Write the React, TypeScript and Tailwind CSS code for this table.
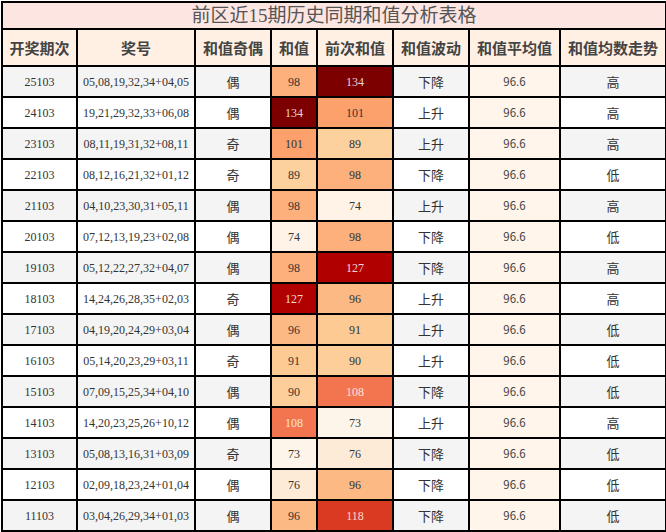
import React from 'react';

type Row = {
  issue: string;
  nums: string;
  parity: string;
  sum: number;
  prev: number;
  trend: string;
  level: string;
};

const rows: Row[] = [
  { issue: '25103', nums: '05,08,19,32,34+04,05', parity: '偶', sum: 98, prev: 134, trend: '下降', level: '高' },
  { issue: '24103', nums: '19,21,29,32,33+06,08', parity: '偶', sum: 134, prev: 101, trend: '上升', level: '高' },
  { issue: '23103', nums: '08,11,19,31,32+08,11', parity: '奇', sum: 101, prev: 89, trend: '上升', level: '高' },
  { issue: '22103', nums: '08,12,16,21,32+01,12', parity: '奇', sum: 89, prev: 98, trend: '下降', level: '低' },
  { issue: '21103', nums: '04,10,23,30,31+05,11', parity: '偶', sum: 98, prev: 74, trend: '上升', level: '高' },
  { issue: '20103', nums: '07,12,13,19,23+02,08', parity: '偶', sum: 74, prev: 98, trend: '下降', level: '低' },
  { issue: '19103', nums: '05,12,22,27,32+04,07', parity: '偶', sum: 98, prev: 127, trend: '下降', level: '高' },
  { issue: '18103', nums: '14,24,26,28,35+02,03', parity: '奇', sum: 127, prev: 96, trend: '上升', level: '高' },
  { issue: '17103', nums: '04,19,20,24,29+03,04', parity: '偶', sum: 96, prev: 91, trend: '上升', level: '低' },
  { issue: '16103', nums: '05,14,20,23,29+03,11', parity: '奇', sum: 91, prev: 90, trend: '上升', level: '低' },
  { issue: '15103', nums: '07,09,15,25,34+04,10', parity: '偶', sum: 90, prev: 108, trend: '下降', level: '低' },
  { issue: '14103', nums: '14,20,23,25,26+10,12', parity: '偶', sum: 108, prev: 73, trend: '上升', level: '高' },
  { issue: '13103', nums: '05,08,13,16,31+03,09', parity: '奇', sum: 73, prev: 76, trend: '下降', level: '低' },
  { issue: '12103', nums: '02,09,18,23,24+01,04', parity: '偶', sum: 76, prev: 96, trend: '下降', level: '低' },
  { issue: '11103', nums: '03,04,26,29,34+01,03', parity: '偶', sum: 96, prev: 118, trend: '下降', level: '低' },
];

// heat map colours for the two sum columns
const heat: Record<number, string> = {
  73: 'bg-[#fef5ea] text-[#333]',
  74: 'bg-[#fef3e6] text-[#333]',
  76: 'bg-[#feebd7] text-[#333]',
  89: 'bg-[#fdd19e] text-[#333]',
  90: 'bg-[#fdce99] text-[#333]',
  91: 'bg-[#fdca94] text-[#333]',
  96: 'bg-[#fdb983] text-[#333]',
  98: 'bg-[#fdb07c] text-[#333]',
  101: 'bg-[#fca06c] text-[#333]',
  108: 'bg-[#f27550] text-[#fde3d8]',
  118: 'bg-[#d93a21] text-[#fbd9d0]',
  127: 'bg-[#b10000] text-[#f3d6d6]',
  134: 'bg-[#7d0000] text-[#ecd2d2]',
};

const headers = ['开奖期次', '奖号', '和值奇偶', '和值', '前次和值', '和值波动', '和值平均值', '和值均数走势'];
const widths = ['w-[75px]', 'w-[118px]', 'w-[76px]', 'w-[46px]', 'w-[76px]', 'w-[76px]', 'w-[91px]', 'w-[106px]'];

const serif = "font-['Liberation_Serif','Noto_Sans_CJK_SC',serif]";
const cjk = "font-['Noto_Sans_CJK_SC',sans-serif]";

export default function App() {
  return (
    <div className="w-[666px] h-[532px] bg-white overflow-hidden p-px">
      <table className="w-[664px] table-fixed border-collapse text-center">
        <colgroup>
          {widths.map((w, i) => (
            <col key={i} className={w} />
          ))}
        </colgroup>
        <thead>
          <tr className="h-[27px]">
            <th colSpan={8} className={`border-2 border-black bg-[#fde6e2] text-[19px] font-normal text-[#555] leading-none ${serif}`}>
              前区近15期历史同期和值分析表格
            </th>
          </tr>
          <tr className="h-[37px]">
            {headers.map((h) => (
              <th key={h} className={`border-2 border-black bg-[#fff0e3] text-[15px] font-bold text-[#444] leading-none ${cjk}`}>
                {h}
              </th>
            ))}
          </tr>
        </thead>
        <tbody>
          {rows.map((r, i) => {
            const stripe = i % 2 === 0 ? 'bg-[#f4f4f4]' : 'bg-white';
            return (
              <tr key={r.issue} className="h-[31px]">
                <td className={`border-2 border-black ${stripe} text-[12px] text-[#333] ${serif}`}>{r.issue}</td>
                <td className={`border-2 border-black ${stripe} text-[12px] text-[#333] ${serif}`}>{r.nums}</td>
                <td className={`border-2 border-black ${stripe} text-[13px] text-[#333] ${cjk}`}>{r.parity}</td>
                <td className={`border-2 border-black ${heat[r.sum]} text-[12px] ${serif}`}>{r.sum}</td>
                <td className={`border-2 border-black ${heat[r.prev]} text-[12px] ${serif}`}>{r.prev}</td>
                <td className={`border-2 border-black ${stripe} text-[13px] text-[#333] ${cjk}`}>{r.trend}</td>
                <td className={`border-2 border-black bg-[#fff5eb] text-[11.5px] text-[#444] ${cjk}`}>96.6</td>
                <td className={`border-2 border-black ${stripe} text-[13px] text-[#333] ${cjk}`}>{r.level}</td>
              </tr>
            );
          })}
        </tbody>
      </table>
    </div>
  );
}
